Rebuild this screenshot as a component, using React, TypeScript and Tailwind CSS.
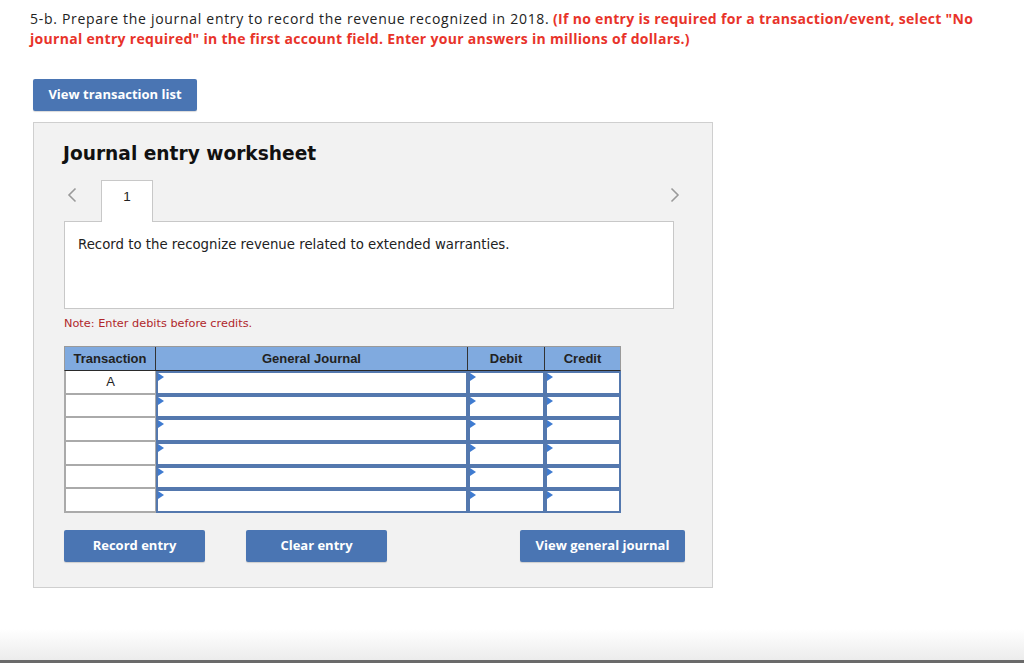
import React from 'react'

const rows = ['A', '', '', '', '', '']

function Tri() {
  return (
    <span className="absolute left-0 top-0 w-0 h-0 border-t-[4px] border-b-[4px] border-l-[6px] border-t-transparent border-b-transparent border-l-[#3f7bd0]" />
  )
}

function InputCell({ w }: { w: string }) {
  return (
    <div className={`relative ${w} shrink-0 h-full bg-white border-2 border-[#5478ae]`}>
      <Tri />
    </div>
  )
}

function BlueButton({ label, w }: { label: string; w: string }) {
  return (
    <button className={`${w} shrink-0 h-[32px] rounded-[2px] bg-[#4a75b3] text-white text-[13px] font-bold font-['Open_Sans',sans-serif] shadow-[0_1px_1px_rgba(0,0,0,0.15)]`}>
      {label}
    </button>
  )
}

function Chevron({ dir }: { dir: 'left' | 'right' }) {
  return (
    <svg width="10" height="16" viewBox="0 0 10 16" className="block">
      <polyline
        points={dir === 'left' ? '8.5,1.5 2,8 8.5,14.5' : '1.5,1.5 8,8 1.5,14.5'}
        fill="none"
        stroke="#9a9a9a"
        strokeWidth="1.6"
      />
    </svg>
  )
}

export default function App() {
  return (
    <div className="min-h-[663px] flex flex-col bg-white font-['Liberation_Sans',Arial,sans-serif]">
      <div className="flex-1">
        {/* question prompt */}
        <div className="pl-[30px] pt-[9px] w-[1010px] font-['Open_Sans',sans-serif] text-[14px] leading-[20px] text-[#222]">
          <span className="tracking-[0.7px]">5-b. Prepare the journal entry to record the revenue recognized in 2018.</span>{' '}
          <span className="font-bold text-[#e8332a] tracking-[0.3px]">
            (If no entry is required for a transaction/event, select "No
            <br />
            journal entry required" in the first account field. Enter your answers in millions of dollars.)
          </span>
        </div>

        <div className="pl-[33px] mt-[30px]">
          <BlueButton label="View transaction list" w="w-[164px]" />
        </div>

        {/* worksheet panel */}
        <div className="ml-[33px] mt-[11px] w-[680px] h-[466px] bg-[#f2f2f2] border border-[#cfcfcf] pl-[29px] pt-[20px]">
          <h2 className="font-['DejaVu_Sans',Verdana,sans-serif] font-bold text-[18.6px] leading-[22px] text-[#111]">
            Journal entry worksheet
          </h2>

          <div className="mt-[14px] ml-px flex items-end h-[42px] w-[620px] relative">
            <span className="absolute left-[3px] top-[8px]">
              <Chevron dir="left" />
            </span>
            <div className="ml-[37px] w-[52px] h-[42px] bg-white border border-b-0 border-[#c8c8c8] flex justify-center pt-[8px] text-[13.5px] leading-[16px] text-[#222] relative top-px z-10">
              1
            </div>
            <span className="absolute left-[606px] top-[8px]">
              <Chevron dir="right" />
            </span>
          </div>

          <div className="ml-px w-[610px] h-[88px] bg-white border border-[#c8c8c8] px-[13px] pt-[15px] font-['DejaVu_Sans',Verdana,sans-serif] text-[13.3px] leading-[16px] text-[#222]">
            Record to the recognize revenue related to extended warranties.
          </div>

          <p className="ml-px mt-[8px] font-['DejaVu_Sans',Verdana,sans-serif] text-[11.3px] leading-[14px] text-[#b0262a]">
            Note: Enter debits before credits.
          </p>

          {/* journal table */}
          <div className="ml-px mt-[15px] w-[557px]">
            <div className="flex h-[25px] bg-[#80aadf] border border-[#9a9a9a] border-b-[#2a2a2a] text-[13px] font-bold text-[#222]">
              <div className="w-[91px] flex items-center justify-center border-r border-[#333]">Transaction</div>
              <div className="w-[312px] flex items-center justify-center border-r border-[#333]">General Journal</div>
              <div className="w-[77px] flex items-center justify-center border-r border-[#333]">Debit</div>
              <div className="flex-1 flex items-center justify-center">Credit</div>
            </div>
            {rows.map((t, i) => (
              <div key={i} className="flex h-[23.7px]">
                <div className="w-[92px] shrink-0 h-full bg-white border-l-2 border-r border-b-2 border-[#aaaaaa] flex items-center justify-center text-[13px] text-[#222]">
                  {t}
                </div>
                <InputCell w="w-[312px]" />
                <InputCell w="w-[77px]" />
                <InputCell w="w-[76px]" />
              </div>
            ))}
          </div>

          <div className="ml-px mt-[17px] flex">
            <BlueButton label="Record entry" w="w-[141px]" />
            <div className="ml-[41px] shrink-0">
              <BlueButton label="Clear entry" w="w-[141px]" />
            </div>
            <div className="ml-[133px] shrink-0">
              <BlueButton label="View general journal" w="w-[165px]" />
            </div>
          </div>
        </div>
      </div>

      <div className="h-[34px] bg-gradient-to-b from-white to-[#ececec] border-b-[3px] border-[#6a6a6a]" />
    </div>
  )
}
